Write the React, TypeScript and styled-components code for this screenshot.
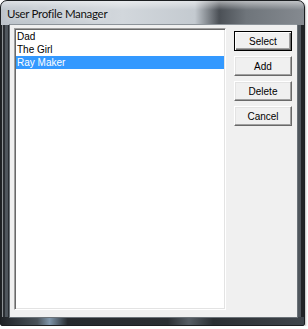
import styled, { createGlobalStyle } from "styled-components"

const profiles = ["Dad", "The Girl", "Ray Maker"]
const selected = 2
const actions = ["Select", "Add", "Delete", "Cancel"]

export default function App() {
  return (
    <>
      <Global />
      <Window>
        <TitleBar>User Profile Manager</TitleBar>
        <Client>
          <ListBox>
            {profiles.map((name, i) => (
              <Item key={name} $selected={i === selected}>
                {name}
              </Item>
            ))}
          </ListBox>
          <Buttons>
            {actions.map((label, i) => (
              <Button key={label} $default={i === 0}>
                {label}
              </Button>
            ))}
          </Buttons>
        </Client>
      </Window>
    </>
  )
}

const Global = createGlobalStyle`
  body {
    margin: 0;
    background: #ffffff;
  }
`

const Window = styled.div`
  width: 305px;
  height: 326px;
  box-sizing: border-box;
  display: flex;
  flex-direction: column;
  padding: 0 6px 7px 8px;
  border: 1px solid #1c1f22;
  border-radius: 7px 7px 2px 2px;
  background:
    linear-gradient(to bottom, rgba(255, 255, 255, 0.5), rgba(255, 255, 255, 0) 9px) top / 100% 24px no-repeat,
    linear-gradient(to right, #bcc3ca 0%, #d2d7dc 40%, #c4cad0 64%, #4b5056 72%, #6f757b 81%, #858a90 100%) top / 100% 24px no-repeat,
    linear-gradient(to right, #1f2226 0%, #4a5259 12%, #8096aa 16%, #262a2e 22%, #2b2f33 55%, #565d64 62%, #2b2f33 70%, #3f454b 100%) bottom / 100% 8px no-repeat,
    linear-gradient(to right, #202326 0 1px, #8c9094 1px 2px, #2a2e33 2px 4px, #4f565d 4px 7px, #2a2e33 7px calc(100% - 7px), #4f565d calc(100% - 7px) calc(100% - 3px), #202326 calc(100% - 3px));
  box-shadow: 1px 1px 2px rgba(0, 0, 0, 0.25);
`

const TitleBar = styled.div`
  height: 23px;
  flex: none;
  margin-left: -2px;
  font-family: Lato, "Open Sans", sans-serif;
  font-size: 11.5px;
  letter-spacing: -0.3px;
  line-height: 25px;
  color: #111;
  text-shadow: 0 0 6px rgba(255, 255, 255, 0.9);
`

const Client = styled.div`
  flex: 1;
  display: flex;
  padding: 3px 4px 6px 4px;
  background: #f0f0f0;
  border: 1px solid #6b7278;
  border-top-color: #8d949a;
`

const ListBox = styled.div`
  width: 212px;
  height: 282px;
  box-sizing: border-box;
  padding: 1px;
  border: 1px solid;
  border-color: #a0a0a0 #ffffff #ffffff #a0a0a0;
  box-shadow: inset 1px 1px #696969, inset -1px -1px #e3e3e3;
  background: #ffffff;
  font-family: "Liberation Sans", Arial, sans-serif;
  font-size: 10px;
`

const Item = styled.div<{ $selected?: boolean }>`
  height: 13px;
  line-height: 13px;
  padding-left: 1px;
  color: ${(p) => (p.$selected ? "#ffffff" : "#000000")};
  background: ${(p) => (p.$selected ? "#3399ff" : "transparent")};
`

const Buttons = styled.div`
  display: flex;
  flex-direction: column;
  gap: 5px;
  width: 58px;
  margin-left: 8px;
  padding-top: 3px;
`

const Button = styled.button<{ $default?: boolean }>`
  height: 20px;
  box-sizing: border-box;
  padding: 0;
  font-family: "Liberation Sans", Arial, sans-serif;
  font-size: 10px;
  color: #000;
  background: #f0f0f0;
  border: 1px solid;
  border-color: ${(p) => (p.$default ? "#000" : "#ffffff #696969 #696969 #ffffff")};
  box-shadow: ${(p) =>
    p.$default
      ? "inset 1px 1px #ffffff, inset -1px -1px #696969, inset -2px -2px #a0a0a0"
      : "inset -1px -1px #a0a0a0, inset 1px 1px #e3e3e3"};
`
